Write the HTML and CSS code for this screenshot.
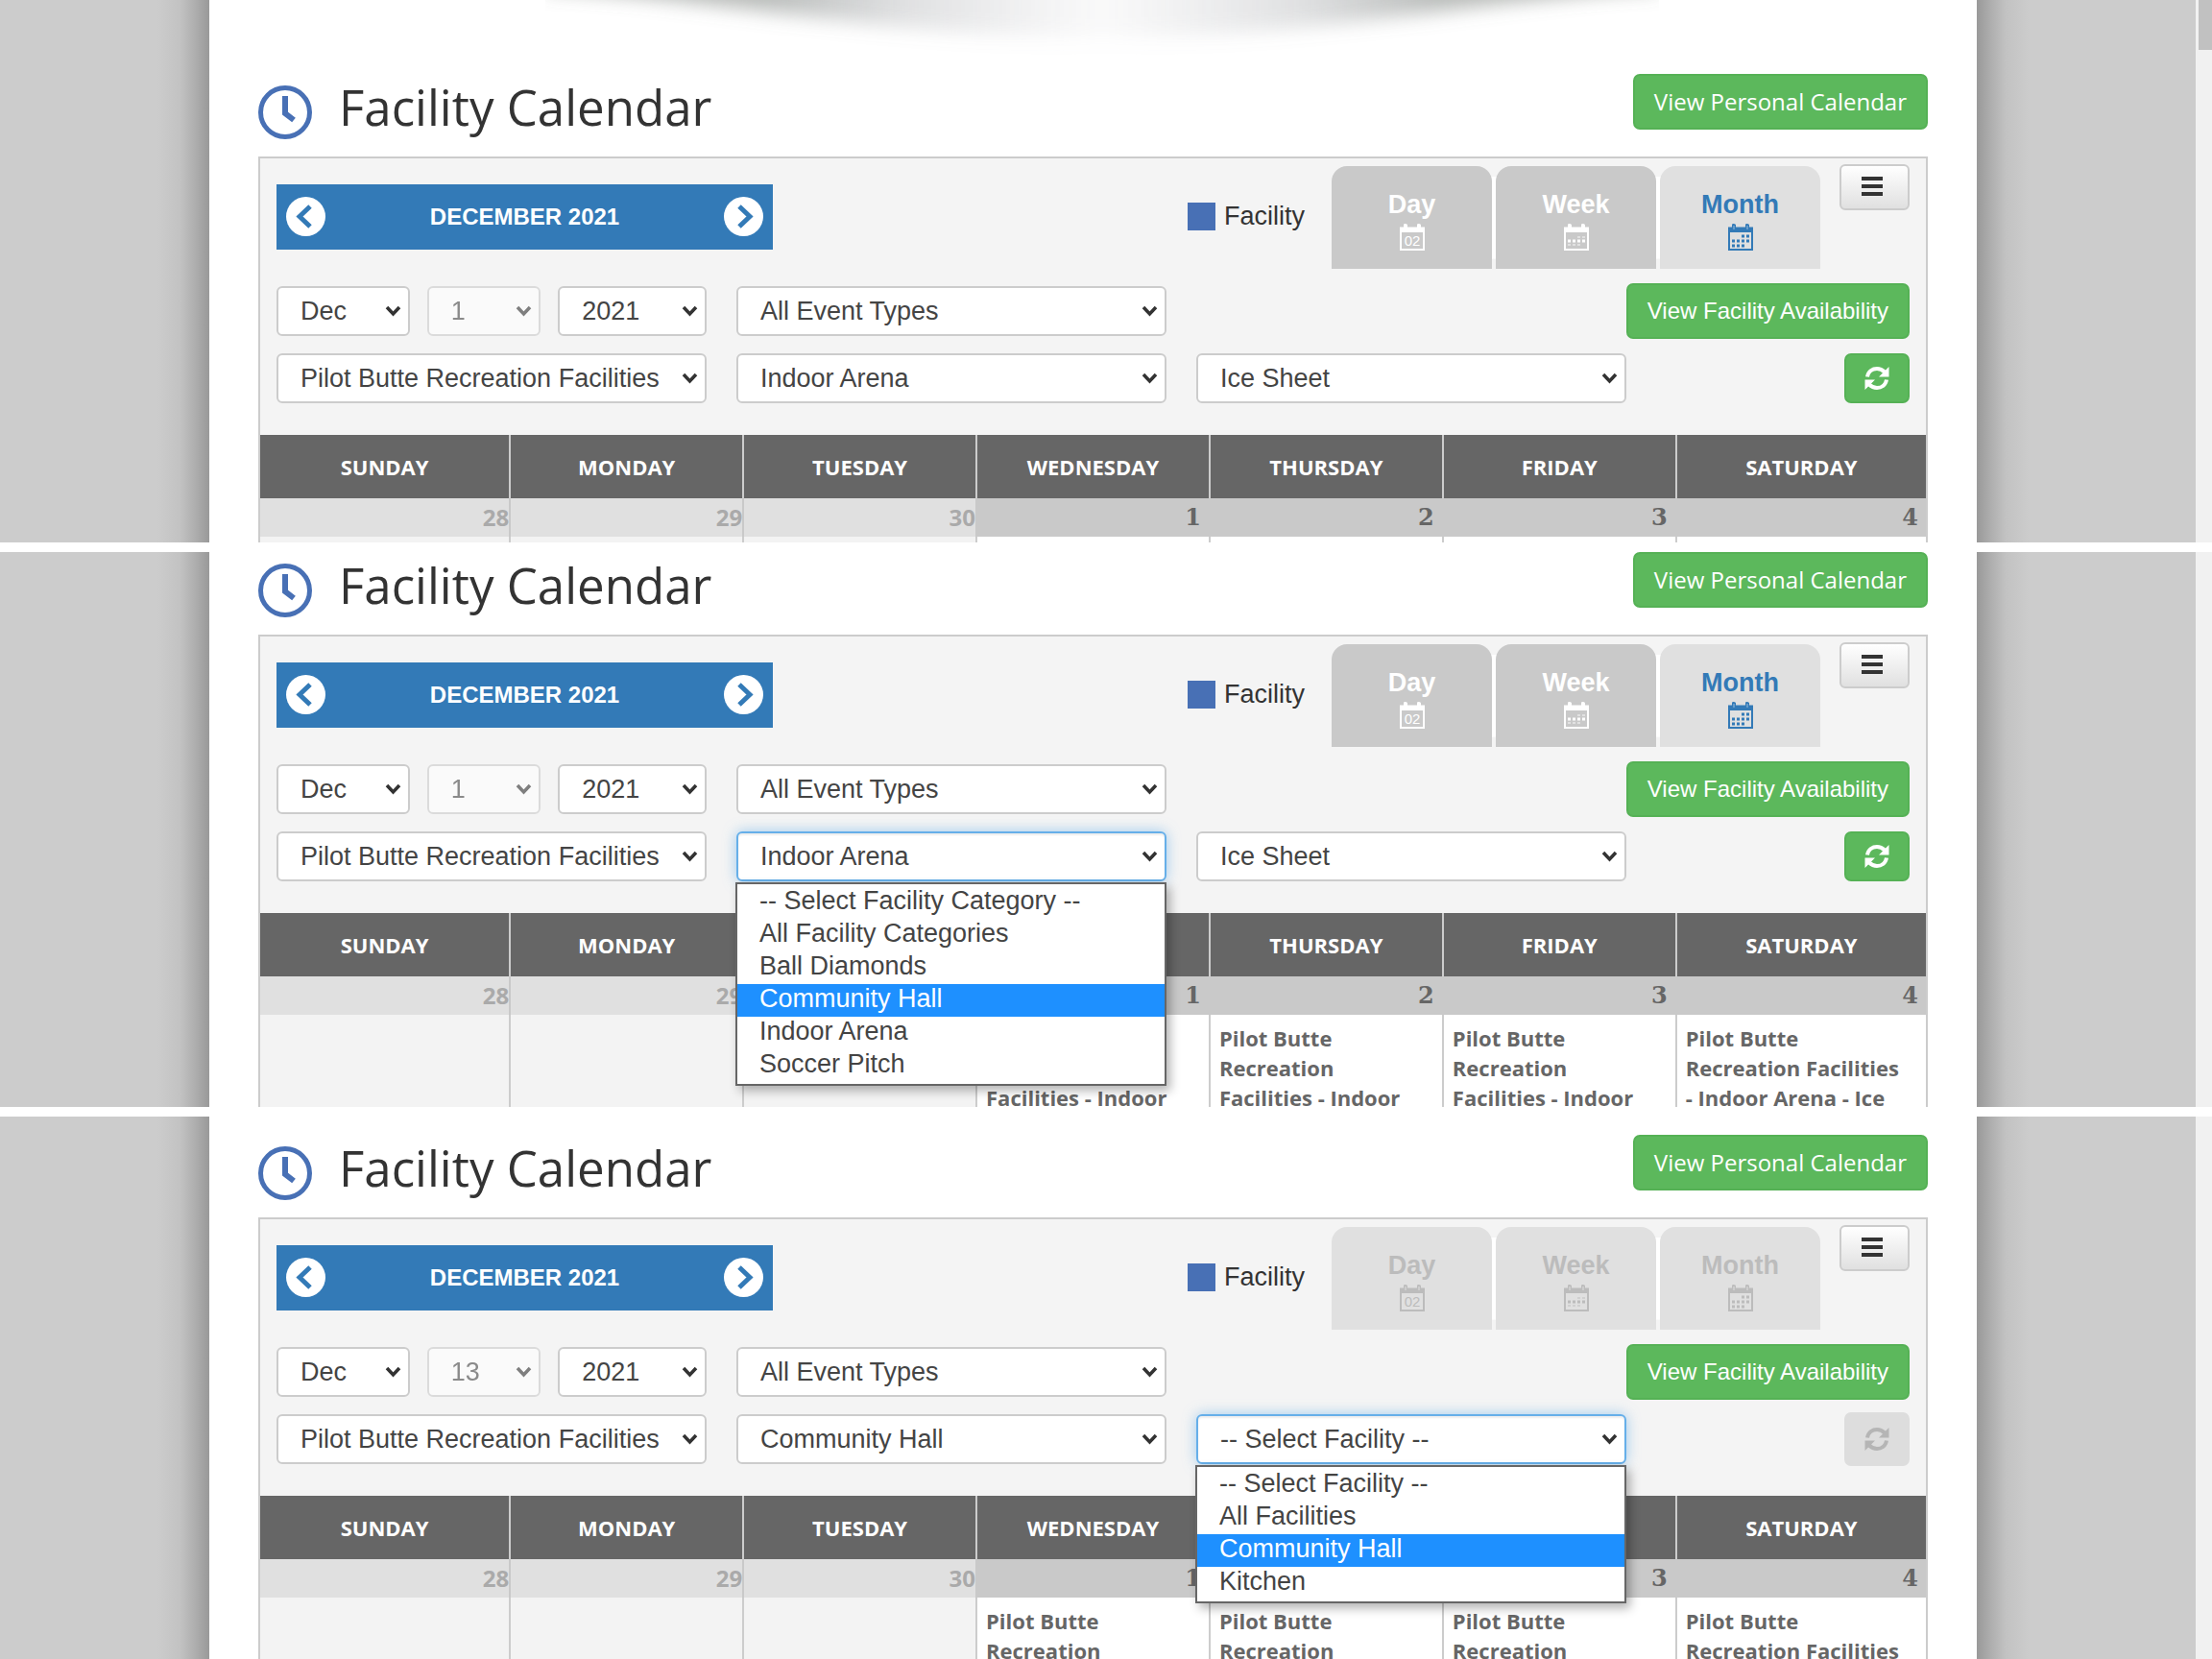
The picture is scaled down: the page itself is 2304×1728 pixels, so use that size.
FILE: index.html
```html
<!DOCTYPE html>
<html lang="en">
<head>
<meta charset="utf-8">
<title>Facility Calendar</title>
<link rel="stylesheet" href="styles.css">
</head>
<body>
<svg class="defs" aria-hidden="true">
  <symbol id="clock" viewBox="0 0 56 56"><circle cx="28" cy="28" r="25.500" fill="none" stroke="currentColor" stroke-width="5"/><path d="M28 11v18l9 7" fill="none" stroke="currentColor" stroke-width="6"/></symbol>
  <symbol id="prev" viewBox="0 0 41 41"><circle cx="20.500" cy="20.500" r="20.500" fill="#fff"/><path d="M25 10L14 20.500 25 31" fill="none" stroke="#337ab7" stroke-width="5"/></symbol>
  <symbol id="next" viewBox="0 0 41 41"><circle cx="20.500" cy="20.500" r="20.500" fill="#fff"/><path d="M16 10l11 10.500L16 31" fill="none" stroke="#337ab7" stroke-width="5"/></symbol>
  <symbol id="cal" viewBox="0 0 26 28"><path d="M1 5v22h24V5" fill="none" stroke="currentColor" stroke-width="2"/><path d="M0 3.500H4V1q0-1 1.500-1T8 1v2.500h10V1q0-1 1.500-1T22 1v2.500h4V9H0z" fill="currentColor"/><path d="M6 2v4M20 2v4" stroke="#fff" stroke-opacity=".5" stroke-width="1"/></symbol>
  <symbol id="refresh" viewBox="0 0 26 26"><path d="M3 11.500C4 5.500 8.500 3 13 3c3.500 0 6 1.500 8 3.500M23 14.500C22 20.500 17.500 23 13 23c-3.500 0-6-1.500-8-3.500" fill="none" stroke="currentColor" stroke-width="4"/><path d="M25.500 1v10.500H15zM.5 25V14.500H11z" fill="currentColor"/></symbol>
</svg>

<div class="steps">
  <section class="step step-1">
    <main class="sheet">
      <svg class="shade" viewBox="0 0 1160 76" preserveAspectRatio="none" aria-hidden="true">
        <filter id="soft" x="-10%" y="-100%" width="120%" height="300%"><feGaussianBlur stdDeviation="10"/></filter>
        <linearGradient id="fade"><stop offset="0" stop-color="#6f756f" stop-opacity=".6"/><stop offset=".2" stop-color="#747a76" stop-opacity=".5"/><stop offset=".32" stop-color="#808488" stop-opacity=".25"/><stop offset=".5" stop-color="#a0a0a8" stop-opacity=".06"/><stop offset=".68" stop-color="#808488" stop-opacity=".25"/><stop offset=".8" stop-color="#747a76" stop-opacity=".5"/><stop offset="1" stop-color="#6f756f" stop-opacity=".6"/></linearGradient>
        <path d="M0-12C200 0 340 38 580 38 820 38 960 0 1160-12V-40H0z" fill="url(#fade)" filter="url(#soft)"/>
      </svg>
      <header class="head"><h1><svg class="clock"><use href="#clock"/></svg>Facility Calendar</h1><button class="btn">View Personal Calendar</button></header>
      <div class="box">
        <div class="top">
          <div class="nav"><button aria-label="Previous month"><svg><use href="#prev"/></svg></button><strong>DECEMBER 2021</strong><button aria-label="Next month"><svg><use href="#next"/></svg></button></div>
          <span class="legend"><i></i>Facility</span>
          <div class="tabs">
            <button>Day<svg viewBox="0 0 26 28"><use href="#cal"/><text x="13" y="23" text-anchor="middle">02</text></svg></button>
            <button>Week<svg viewBox="0 0 26 28"><use href="#cal"/><path class="faint" d="M14 14h8M4 22h14"/><path class="dots" d="M4 18h18"/></svg></button>
            <button class="on">Month<svg viewBox="0 0 26 28"><use href="#cal"/><path class="dots" d="M14 13h8M4 18h18M4 23h13"/></svg></button>
          </div>
          <button class="menu" aria-label="Menu"><i></i><i></i><i></i></button>
        </div>
        <div class="filters">
          <div class="date"><select aria-label="Month"><option>Dec</option></select><select aria-label="Day" disabled><option>1</option></select><select aria-label="Year"><option>2021</option></select></div>
          <select aria-label="Event type"><option>All Event Types</option></select>
          <button class="btn avail">View Facility Availability</button>
          <select aria-label="Facility group"><option>Pilot Butte Recreation Facilities</option></select>
          <select aria-label="Facility category"><option>Indoor Arena</option></select>
          <select aria-label="Facility"><option>Ice Sheet</option></select>
          <button class="btn refresh" aria-label="Refresh"><svg><use href="#refresh"/></svg></button>
        </div>
        <table>
          <colgroup><col class="edge"><col><col><col><col><col><col class="edge"></colgroup>
          <thead><tr><th>SUNDAY</th><th>MONDAY</th><th>TUESDAY</th><th>WEDNESDAY</th><th>THURSDAY</th><th>FRIDAY</th><th>SATURDAY</th></tr></thead>
          <tbody>
            <tr class="nums"><td class="off">28</td><td class="off">29</td><td class="off">30</td><td>1</td><td>2</td><td>3</td><td>4</td></tr>
            <tr class="events"><td class="off"></td><td class="off"></td><td class="off"></td><td></td><td></td><td></td><td></td></tr>
          </tbody>
        </table>
      </div>
    </main>
    <div class="track"><div class="thumb"></div></div>
  </section>

  <section class="step step-2">
    <main class="sheet">
      <header class="head"><h1><svg class="clock"><use href="#clock"/></svg>Facility Calendar</h1><button class="btn">View Personal Calendar</button></header>
      <div class="box">
        <div class="top">
          <div class="nav"><button aria-label="Previous month"><svg><use href="#prev"/></svg></button><strong>DECEMBER 2021</strong><button aria-label="Next month"><svg><use href="#next"/></svg></button></div>
          <span class="legend"><i></i>Facility</span>
          <div class="tabs">
            <button>Day<svg viewBox="0 0 26 28"><use href="#cal"/><text x="13" y="23" text-anchor="middle">02</text></svg></button>
            <button>Week<svg viewBox="0 0 26 28"><use href="#cal"/><path class="faint" d="M14 14h8M4 22h14"/><path class="dots" d="M4 18h18"/></svg></button>
            <button class="on">Month<svg viewBox="0 0 26 28"><use href="#cal"/><path class="dots" d="M14 13h8M4 18h18M4 23h13"/></svg></button>
          </div>
          <button class="menu" aria-label="Menu"><i></i><i></i><i></i></button>
        </div>
        <div class="filters">
          <div class="date"><select aria-label="Month"><option>Dec</option></select><select aria-label="Day" disabled><option>1</option></select><select aria-label="Year"><option>2021</option></select></div>
          <select aria-label="Event type"><option>All Event Types</option></select>
          <button class="btn avail">View Facility Availability</button>
          <select aria-label="Facility group"><option>Pilot Butte Recreation Facilities</option></select>
          <div class="open"><select aria-label="Facility category"><option>Indoor Arena</option></select>
            <ul class="list" role="listbox" aria-label="Facility categories"><li role="option">-- Select Facility Category --</li><li role="option">All Facility Categories</li><li role="option">Ball Diamonds</li><li role="option" aria-selected="true">Community Hall</li><li role="option">Indoor Arena</li><li role="option">Soccer Pitch</li></ul></div>
          <select aria-label="Facility"><option>Ice Sheet</option></select>
          <button class="btn refresh" aria-label="Refresh"><svg><use href="#refresh"/></svg></button>
        </div>
        <table>
          <colgroup><col class="edge"><col><col><col><col><col><col class="edge"></colgroup>
          <thead><tr><th>SUNDAY</th><th>MONDAY</th><th>TUESDAY</th><th>WEDNESDAY</th><th>THURSDAY</th><th>FRIDAY</th><th>SATURDAY</th></tr></thead>
          <tbody>
            <tr class="nums"><td class="off">28</td><td class="off">29</td><td class="off">30</td><td>1</td><td>2</td><td>3</td><td>4</td></tr>
            <tr class="events"><td class="off"></td><td class="off"></td><td class="off"></td><td>Pilot Butte Recreation Facilities - Indoor</td><td>Pilot Butte Recreation Facilities - Indoor</td><td>Pilot Butte Recreation Facilities - Indoor</td><td>Pilot Butte Recreation Facilities - Indoor Arena - Ice</td></tr>
          </tbody>
        </table>
      </div>
    </main>
    <div class="track"></div>
  </section>

  <section class="step step-3">
    <main class="sheet">
      <header class="head"><h1><svg class="clock"><use href="#clock"/></svg>Facility Calendar</h1><button class="btn">View Personal Calendar</button></header>
      <div class="box">
        <div class="top">
          <div class="nav"><button aria-label="Previous month"><svg><use href="#prev"/></svg></button><strong>DECEMBER 2021</strong><button aria-label="Next month"><svg><use href="#next"/></svg></button></div>
          <span class="legend"><i></i>Facility</span>
          <div class="tabs">
            <button disabled>Day<svg viewBox="0 0 26 28"><use href="#cal"/><text x="13" y="23" text-anchor="middle">02</text></svg></button>
            <button disabled>Week<svg viewBox="0 0 26 28"><use href="#cal"/><path class="faint" d="M14 14h8M4 22h14"/><path class="dots" d="M4 18h18"/></svg></button>
            <button disabled>Month<svg viewBox="0 0 26 28"><use href="#cal"/><path class="dots" d="M14 13h8M4 18h18M4 23h13"/></svg></button>
          </div>
          <button class="menu" aria-label="Menu"><i></i><i></i><i></i></button>
        </div>
        <div class="filters">
          <div class="date"><select aria-label="Month"><option>Dec</option></select><select aria-label="Day" disabled><option>13</option></select><select aria-label="Year"><option>2021</option></select></div>
          <select aria-label="Event type"><option>All Event Types</option></select>
          <button class="btn avail">View Facility Availability</button>
          <select aria-label="Facility group"><option>Pilot Butte Recreation Facilities</option></select>
          <select aria-label="Facility category"><option>Community Hall</option></select>
          <div class="open"><select aria-label="Facility"><option>-- Select Facility --</option></select>
            <ul class="list" role="listbox" aria-label="Facilities"><li role="option">-- Select Facility --</li><li role="option">All Facilities</li><li role="option" aria-selected="true">Community Hall</li><li role="option">Kitchen</li></ul></div>
          <button class="btn refresh" aria-label="Refresh" disabled><svg><use href="#refresh"/></svg></button>
        </div>
        <table>
          <colgroup><col class="edge"><col><col><col><col><col><col class="edge"></colgroup>
          <thead><tr><th>SUNDAY</th><th>MONDAY</th><th>TUESDAY</th><th>WEDNESDAY</th><th>THURSDAY</th><th>FRIDAY</th><th>SATURDAY</th></tr></thead>
          <tbody>
            <tr class="nums"><td class="off">28</td><td class="off">29</td><td class="off">30</td><td>1</td><td>2</td><td>3</td><td>4</td></tr>
            <tr class="events"><td class="off"></td><td class="off"></td><td class="off"></td><td>Pilot Butte Recreation</td><td>Pilot Butte Recreation</td><td>Pilot Butte Recreation</td><td>Pilot Butte Recreation Facilities</td></tr>
          </tbody>
        </table>
      </div>
    </main>
    <div class="track"></div>
  </section>
</div>
</body>
</html>
```
FILE: styles.css
```css
* { box-sizing: border-box; }
body { margin: 0; background: #fff; color: #333; font-family: "Open Sans", "Noto Sans", sans-serif; }
button, select { font: inherit; color: inherit; margin: 0; }
svg { display: block; }
.defs { display: none; }

/* three stages of the same page, stacked */
.steps { display: grid; grid-template-rows: 565fr 578fr 565fr; gap: 10px; height: 100vh; }
.step { display: flex; min-height: 0; overflow: hidden; background: linear-gradient(to right, #ccc 164px, #c2c2c2 188px, #adadad 204px, #999 218px, #999 calc(100% - 245px), #adadad calc(100% - 231px), #c2c2c2 calc(100% - 215px), #ccc calc(100% - 191px)); }
.sheet { position: relative; flex: 1; min-width: 0; margin: 0 228px 0 218px; padding: 0 51px; background: #fff; }
.step-1 .sheet { padding-top: 77px; }
.step-2 .sheet { padding-top: 0; }
.step-3 .sheet { padding-top: 19px; }
.track { flex: none; width: 17px; background: #f1f1f1; }
.thumb { height: 52px; margin-left: 3px; background: #c1c1c1; }
.shade { position: absolute; top: 0; left: 19%; width: 63%; height: 76px; }

.head { position: relative; display: flex; justify-content: space-between; align-items: flex-start; height: 86px; }
h1 { display: flex; align-items: center; gap: 28px; margin: 0; font-size: 51px; font-weight: 400; line-height: 68px; }
.clock { width: 56px; height: 56px; margin-top: 12px; color: #4870b5; }
.btn { height: 58px; padding: 0 20px; border: 2px solid #55b155; border-radius: 7px; background: #5cb85c; color: #fff; font-size: 24px; line-height: 54px; white-space: nowrap; }

.box { border: 2px solid #ccc; border-bottom: 0; background: #f4f4f4; font-family: "Liberation Sans", Arial, sans-serif; }
.top { display: flex; align-items: center; height: 115px; padding: 6px 17px 0; }
.nav { display: flex; align-items: center; justify-content: space-between; width: 517px; height: 68px; padding: 0 10px; background: #337ab7; color: #fff; font-size: 24px; }
.nav button { width: 41px; height: 41px; padding: 0; border: 0; background: none; }
.nav svg { width: 41px; height: 41px; }
.legend { display: flex; align-items: center; gap: 9px; margin-left: auto; font-size: 27px; }
.legend i { width: 29px; height: 29px; background: #4870b5; }
.tabs { display: flex; gap: 4px; align-self: flex-end; margin-left: 28px; background: linear-gradient(#fff, #fff) center / 200px 80% no-repeat; }
.tabs button { display: flex; flex-direction: column; align-items: center; gap: 4px; width: 167px; height: 107px; padding: 25px 0 0; border: 0; border-radius: 16px 16px 0 0; background: #c9c9c9; color: #fff; font-size: 27px; font-weight: 700; line-height: 31px; }
.tabs .on { background: #e0e0e0; color: #337ab7; }
.tabs button:disabled { background: #e0e0e0; color: #bcbcbc; }
.tabs svg { width: 26px; height: 28px; }
.tabs text { fill: currentColor; font-size: 15px; font-weight: 400; }
.dots, .faint { fill: none; stroke: currentColor; stroke-width: 3; stroke-dasharray: 3 2; }
.faint { stroke-opacity: .45; stroke-width: 2; }
.menu { display: flex; flex-direction: column; align-items: center; justify-content: center; gap: 4px; align-self: flex-start; width: 73px; height: 48px; margin-left: 20px; padding: 0 6px 2px 0; border: 2px solid #ccc; border-radius: 6px; background: linear-gradient(#fff, #e0e0e0); }
.menu i { width: 22px; height: 4px; background: #333; }

.filters { display: grid; grid-template-columns: repeat(3, minmax(0, 448fr)) minmax(0, 264fr); grid-auto-rows: 52px; align-items: center; gap: 18px 31px; padding: 18px 17px 33px; }
.date { display: grid; grid-template-columns: 138fr 118fr 154fr; gap: 18px; }
select { appearance: none; width: 100%; min-width: 0; height: 52px; padding: 0 47px 0 23px; border: 2px solid #ccc; border-radius: 6px; background: #fff url("data:image/svg+xml,%3Csvg xmlns='http://www.w3.org/2000/svg' width='17' height='12'%3E%3Cpath d='M2 2l6.500 7L15 2' fill='none' stroke='%23333' stroke-width='3.500'/%3E%3C/svg%3E") right 7px center no-repeat; color: #444; font-size: 27px; }
select:disabled { opacity: .6; }
.avail { grid-column: 3 / 5; justify-self: end; }
.refresh { justify-self: end; width: 68px; height: 52px; padding: 0 19px; }
.refresh:disabled { height: 56px; border-color: #ddd; background: #ddd; color: #b5b5b5; }
.refresh svg { width: 26px; height: 26px; }
.open { position: relative; height: 52px; }
.open select { border-color: #66afe9; box-shadow: inset 0 2px 2px rgba(0, 0, 0, .07), 0 0 14px rgba(102, 175, 233, .6); }
.list { position: absolute; z-index: 2; top: 53px; left: -1px; right: 0; margin: 0; padding: 2px 0; border: 2px solid #666; background: #fff; box-shadow: 4px 5px 10px rgba(0, 0, 0, .3); color: #444; font-size: 27px; list-style: none; }
.list li { height: 34px; padding-left: 23px; line-height: 30px; }
.list [aria-selected] { background: #1e90ff; color: #fff; }

table { width: 100%; border-collapse: collapse; table-layout: fixed; font-family: "Open Sans", "Noto Sans", sans-serif; font-weight: 700; }
.edge { width: 15%; }
th { height: 66px; padding: 0; border-left: 2px solid #ccc; background: #666; color: #fff; font-size: 22px; }
td { padding: 0 8px; border-left: 2px solid #ccc; background: #fff; color: #666; }
th:first-child, td:first-child { border-left: 0; }
.nums td { height: 40px; border-color: #c9c9c9; background: #c9c9c9; font-family: "DejaVu Serif", serif; font-size: 24px; line-height: 32px; text-align: right; }
.nums .off { padding: 0; background: #e0e0e0; color: #aaa; font-family: "Open Sans", "Noto Sans", sans-serif; }
.events td { height: 200px; padding: 9px 16px 8px 9px; font-size: 22px; line-height: 31px; vertical-align: top; }
.events .off { background: #f3f3f3; }
```
